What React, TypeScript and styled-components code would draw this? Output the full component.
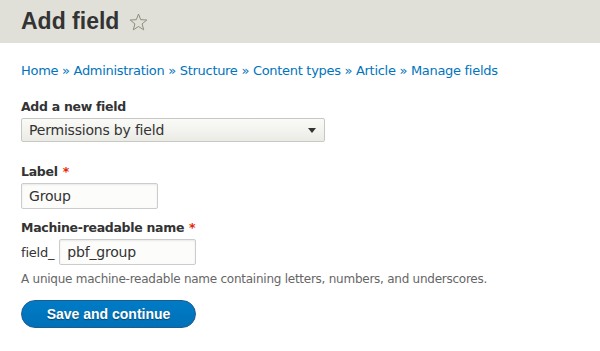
import styled, { createGlobalStyle } from "styled-components";

const GlobalStyle = createGlobalStyle`
  body {
    margin: 0;
    background: #ffffff;
    font-family: "DejaVu Sans", Verdana, sans-serif;
    color: #333;
  }
`;

const Header = styled.header`
  height: 43px;
  background: #e0e0d8;
  display: flex;
  align-items: center;
  padding: 0 21px;
`;

const Title = styled.h1`
  margin: 0;
  font-family: "Liberation Sans", Arial, sans-serif;
  font-weight: bold;
  font-size: 23px;
  color: #333;
  display: flex;
  align-items: center;
  gap: 10px;
`;

const Main = styled.main`
  padding: 19px 21px 0;
`;

const Breadcrumb = styled.nav`
  font-size: 13px;
  line-height: 18px;
  letter-spacing: -0.3px;
  margin-bottom: 18px;
  a {
    color: #0074bd;
    text-decoration: none;
  }
  span {
    color: #0074bd;
  }
`;

const Field = styled.div<{ $gap: number }>`
  margin-bottom: ${(p) => p.$gap}px;
`;

const Label = styled.label`
  display: block;
  font-weight: bold;
  font-size: 12.5px;
  line-height: 18px;
  letter-spacing: -0.3px;
  margin-bottom: 2px;
`;

const Required = styled.span`
  color: #e62600;
  margin-left: 5px;
`;

const Select = styled.div`
  box-sizing: border-box;
  width: 304px;
  height: 24px;
  border: 1px solid #c8c8c3;
  border-radius: 2px;
  background: linear-gradient(#fafaf8, #ebebe6);
  display: flex;
  align-items: center;
  justify-content: space-between;
  padding: 0 8px 0 7px;
  font-size: 14px;
  letter-spacing: -0.2px;
  color: #333;
`;

const Arrow = styled.span`
  width: 0;
  height: 0;
  border-left: 4px solid transparent;
  border-right: 4px solid transparent;
  border-top: 5px solid #333;
`;

const Input = styled.div<{ $width: number }>`
  box-sizing: border-box;
  width: ${(p) => p.$width}px;
  height: 26px;
  border: 1px solid #ccc;
  border-radius: 2px;
  background: #fcfcfa;
  box-shadow: inset 0 1px 2px rgba(0, 0, 0, 0.08);
  display: flex;
  align-items: center;
  padding: 0 7px;
  font-size: 14px;
  letter-spacing: -0.2px;
  color: #333;
`;

const Row = styled.div`
  display: flex;
  align-items: center;
  gap: 5px;
  font-size: 13px;
  letter-spacing: -0.2px;
`;

const Description = styled.div`
  font-size: 12px;
  line-height: 16px;
  letter-spacing: -0.25px;
  color: #666;
  margin-top: 6px;
  margin-bottom: 13px;
`;

const Button = styled.button`
  box-sizing: border-box;
  width: 175px;
  height: 28px;
  border: 1px solid #1e5c90;
  border-radius: 20px;
  background: linear-gradient(#007bc6, #0071b8);
  color: #fff;
  font-family: "Liberation Sans", Arial, sans-serif;
  font-weight: bold;
  font-size: 14px;
  padding: 0;
  text-shadow: 0 1px 1px rgba(0, 0, 0, 0.4);
`;

function Star() {
  return (
    <svg width="19" height="18" viewBox="0 0 19 18">
      <path
        d="M9.5 1 L11.7 6.7 L17.8 7 L13.1 10.9 L14.7 16.8 L9.5 13.5 L4.3 16.8 L5.9 10.9 L1.2 7 L7.3 6.7 Z"
        fill="none"
        stroke="#8e8e7e"
        strokeWidth="1"
        strokeLinejoin="round"
      />
    </svg>
  );
}

const crumbs = ["Home", "Administration", "Structure", "Content types", "Article", "Manage fields"];

export default function App() {
  return (
    <>
      <GlobalStyle />
      <Header>
        <Title>
          Add field <Star />
        </Title>
      </Header>
      <Main>
        <Breadcrumb>
          {crumbs.map((c, i) => (
            <span key={c}>
              <a href="#">{c}</a>
              {i < crumbs.length - 1 && " » "}
            </span>
          ))}
        </Breadcrumb>
        <Field $gap={21}>
          <Label>Add a new field</Label>
          <Select>
            Permissions by field
            <Arrow />
          </Select>
        </Field>
        <Field $gap={10}>
          <Label>
            Label<Required>*</Required>
          </Label>
          <Input $width={137}>Group</Input>
        </Field>
        <div>
          <Label>
            Machine-readable name<Required>*</Required>
          </Label>
          <Row>
            field_
            <Input $width={137}>pbf_group</Input>
          </Row>
          <Description>
            A unique machine-readable name containing letters, numbers, and underscores.
          </Description>
        </div>
        <Button>Save and continue</Button>
      </Main>
    </>
  );
}
